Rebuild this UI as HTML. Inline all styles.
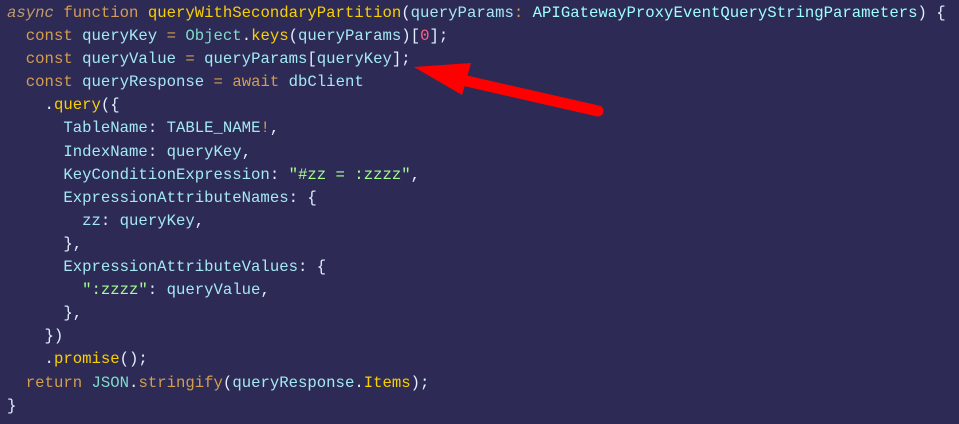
<!DOCTYPE html>
<html><head><style>
html,body{margin:0;padding:0;background:#2d2b55;width:959px;height:424px;overflow:hidden}
pre{margin:0;padding:2px 0 0 7px;font-family:"Liberation Mono",monospace;font-size:15.65px;line-height:23.1px;color:#9effff}
.k{color:#d49d4f}.f{color:#fad000}.o{color:#ff9d00}.i{color:#a5e8f5}.c{color:#7fdbca}.s{color:#a5ff90}.n{color:#ff628c}.p{color:#e1efff}.y{color:#ffd34f}.a{color:#c09a6b;font-style:italic}.t{color:#9effff}
</style></head><body>
<pre><span class="a">async</span> <span class="k">function</span> <span class="f">queryWithSecondaryPartition</span><span class="p">(</span><span class="i">queryParams</span><span class="k">:</span> <span class="t">APIGatewayProxyEventQueryStringParameters</span><span class="p">) {</span>
  <span class="k">const</span> <span class="i">queryKey</span> <span class="k">=</span> <span class="c">Object</span><span class="p">.</span><span class="f">keys</span><span class="p">(</span><span class="i">queryParams</span><span class="p">)[</span><span class="n">0</span><span class="p">];</span>
  <span class="k">const</span> <span class="i">queryValue</span> <span class="k">=</span> <span class="i">queryParams</span><span class="p">[</span><span class="i">queryKey</span><span class="p">];</span>
  <span class="k">const</span> <span class="i">queryResponse</span> <span class="k">=</span> <span class="k">await</span> <span class="i">dbClient</span>
    <span class="p">.</span><span class="f">query</span><span class="p">({</span>
      <span class="i">TableName</span><span class="p">:</span> <span class="i">TABLE_NAME</span><span class="k">!</span><span class="p">,</span>
      <span class="i">IndexName</span><span class="p">:</span> <span class="i">queryKey</span><span class="p">,</span>
      <span class="i">KeyConditionExpression</span><span class="p">:</span> <span class="s">"#zz = :zzzz"</span><span class="p">,</span>
      <span class="i">ExpressionAttributeNames</span><span class="p">: {</span>
        <span class="i">zz</span><span class="p">:</span> <span class="i">queryKey</span><span class="p">,</span>
      <span class="p">},</span>
      <span class="i">ExpressionAttributeValues</span><span class="p">: {</span>
        <span class="s">":zzzz"</span><span class="p">:</span> <span class="i">queryValue</span><span class="p">,</span>
      <span class="p">},</span>
    <span class="p">})</span>
    <span class="p">.</span><span class="f">promise</span><span class="p">();</span>
  <span class="k">return</span> <span class="c">JSON</span><span class="p">.</span><span class="k">stringify</span><span class="p">(</span><span class="i">queryResponse</span><span class="p">.</span><span class="f">Items</span><span class="p">);</span>
<span class="p">}</span></pre>
<svg width="959" height="424" style="position:absolute;left:0;top:0">
<line x1="462" y1="80" x2="598" y2="111" stroke="#ff0000" stroke-width="11" stroke-linecap="round"/>
<polygon points="414,67 471,63 462,95" fill="#ff0000"/>
</svg>
</body></html>
